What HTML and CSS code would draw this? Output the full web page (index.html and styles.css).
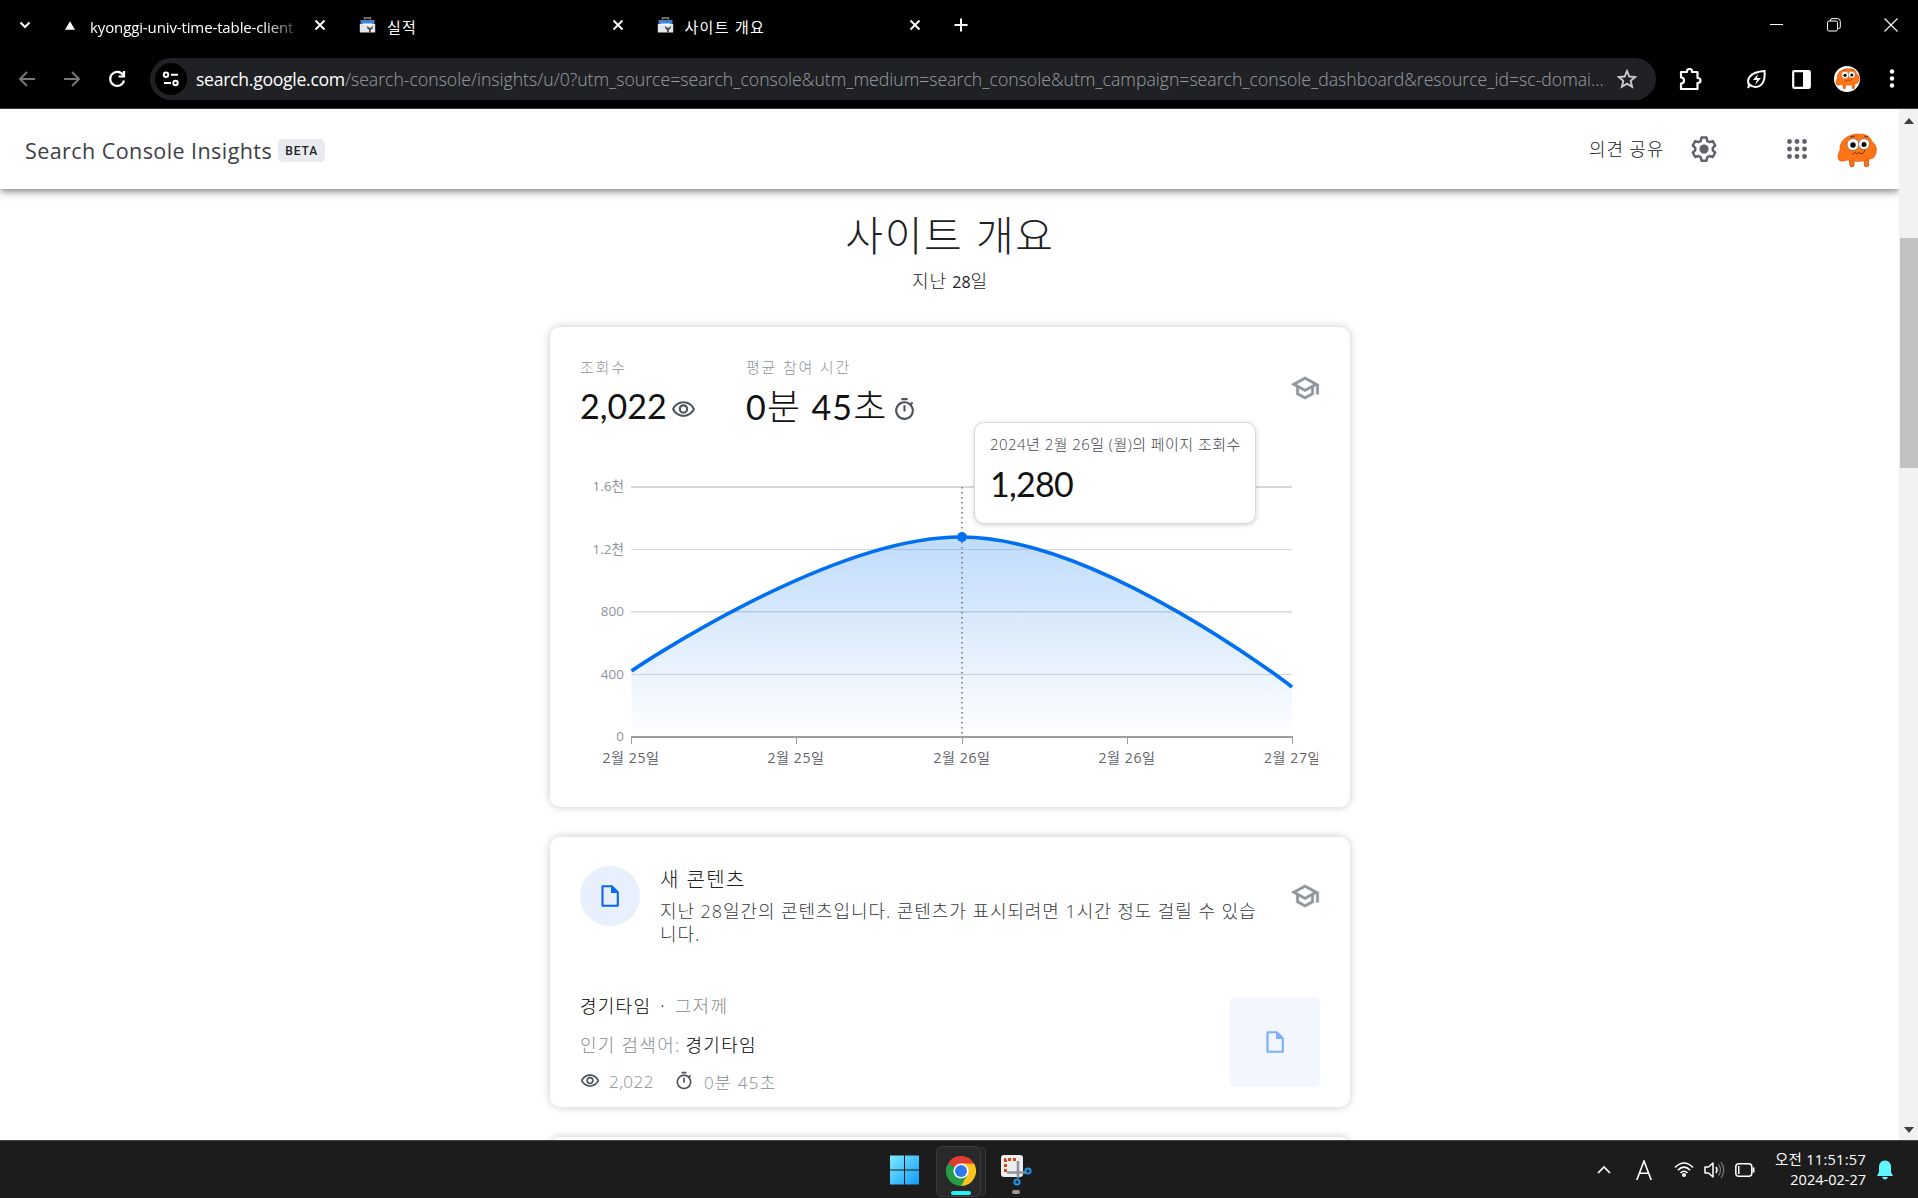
FILE: index.html
```html
<!DOCTYPE html>
<html lang="ko">
<head>
<meta charset="utf-8">
<title>사이트 개요</title>
<link rel="stylesheet" href="styles.css">
</head>
<body>
<svg class="defs" width="0" height="0">
  <defs>
    <symbol id="x" viewBox="0 0 12 12"><path d="M1.500 1.500l9 9M10.500 1.500l-9 9" fill="none" stroke="currentColor" stroke-width="1.900"/></symbol>
    <symbol id="tool" viewBox="0 0 17 16"><path d="M5.500 2.500V1h6v1.500" fill="none" stroke="#8a8d91" stroke-width="1.300"/><path d="M1.500 3h14v5h-14z" fill="#777b80"/><path d="M2 4h13v3.500H2z" fill="#2f86f6"/><path d="M.8 7h15.400v8.500H.8z" fill="#e4e6e9"/><path d="M4 6.500h9v1.500H4z" fill="#fff"/><path d="M8.500 9a2.300 2.300 0 0 0 1.500 3.500V15.500h1.700v-3A2.300 2.300 0 0 0 13.500 9l-1.500 1.800H10z" fill="#444"/></symbol>
    <symbol id="eye" viewBox="0 0 24 24"><path d="M12 4C7 4 2.730 7.110 1 11.500 2.730 15.890 7 19 12 19s9.270-3.110 11-7.500C21.270 7.110 17 4 12 4zm0 13c-3.800 0-7.200-2.100-8.800-5.500C4.800 8.100 8.200 6 12 6s7.200 2.100 8.800 5.500C19.200 14.900 15.800 17 12 17zm0-10c-2.500 0-4.500 2-4.500 4.500S9.500 16 12 16s4.500-2 4.500-4.500S14.500 7 12 7zm0 7a2.500 2.500 0 1 1 0-5 2.500 2.500 0 0 1 0 5z" fill="currentColor"/></symbol>
    <symbol id="timer" viewBox="0 0 24 24"><path d="M15 1H9v2h6V1zm-4 13h2V8h-2v6zm8.030-6.610l1.420-1.420c-.43-.51-.9-.99-1.410-1.410l-1.420 1.420A8.960 8.960 0 0 0 12 4a9 9 0 1 0 7.030 3.390zM12 20a7 7 0 1 1 0-14 7 7 0 0 1 0 14z" fill="currentColor"/></symbol>
    <symbol id="school" viewBox="0 0 24 24"><path d="M12 3L1 9l4 2.180v6L12 21l7-3.820v-6l2-1.090V17h2V9L12 3zm6.820 6L12 12.720 5.180 9 12 5.280 18.820 9zM17 15.990l-5 2.730-5-2.730v-3.720L12 15l5-2.730v3.720z" fill="currentColor" stroke="currentColor" stroke-width=".35"/></symbol>
    <symbol id="doc" viewBox="0 0 18 22"><path d="M1.500 1.200h9.300L16.800 7.200v13.600H1.500z" fill="none" stroke="currentColor" stroke-width="2.100" stroke-linejoin="round"/><path d="M10 1.500V8h6.500z" fill="currentColor"/></symbol>
    <symbol id="blob" viewBox="0 0 40 36"><path d="M12 24h5v9q-2.500 2-4 0zM27 24h5l-.5 9q-2 2-4 0z" fill="#f37414" stroke="#b9480a" stroke-width=".7"/><path d="M3 17C2 8 10 1 22 1c8 0 12 3 13 8 4 2 5 6 4 11-1 4-3 6-7 6-5 3-14 3-21 1-4 1-7 2-9 0-2-3-1-6 1-10z" fill="#ff7417" stroke="#d9560c" stroke-width=".6"/><path d="M13 4l5-1M27 3l4 1" stroke="#333" stroke-width=".9"/><circle cx="16" cy="11.500" r="6" fill="#fff" stroke="#7b3d17" stroke-width=".6"/><circle cx="27" cy="11" r="5.500" fill="#fff" stroke="#7b3d17" stroke-width=".6"/><circle cx="16" cy="12" r="2.700"/><circle cx="27" cy="11.500" r="2.500"/><path d="M15 22q3-4 5-1 2-3 5 0 2-1 3-4" fill="none" stroke="#74320d" stroke-width="1"/></symbol>
  </defs>
</svg>

<div class="browser">
  <div class="tabs">
    <svg class="chev" width="12" height="8" viewBox="0 0 12 8"><path d="M1.500 1.500L6 6l4.500-4.500" fill="none" stroke="#fff" stroke-width="2"/></svg>
    <div class="tab first">
      <svg width="10" height="9" viewBox="0 0 12 10"><path d="M6 0l6 10H0z" fill="#fff"/></svg>
      <span class="tab-name fade">kyonggi-univ-time-table-client</span>
      <svg width="12" height="12"><use href="#x"/></svg>
    </div>
    <div class="tab">
      <svg width="17" height="16"><use href="#tool"/></svg>
      <span class="tab-name">실적</span>
      <svg width="12" height="12"><use href="#x"/></svg>
    </div>
    <div class="tab">
      <svg width="17" height="16"><use href="#tool"/></svg>
      <span class="tab-name">사이트 개요</span>
      <svg width="12" height="12"><use href="#x"/></svg>
    </div>
    <svg class="plus" width="14" height="14" viewBox="0 0 14 14"><path d="M7 .5v13M.5 7h13" stroke="#fff" stroke-width="2"/></svg>
    <div class="window-buttons">
      <svg width="14" height="14" viewBox="0 0 14 14"><path d="M0 6.500h13" stroke="#fff"/></svg>
      <svg width="14" height="14" viewBox="0 0 14 14"><g fill="none" stroke="#fff"><rect x=".5" y="3" width="10" height="10" rx="1.500"/><path d="M3.500 3V2Q3.500.6 5 .6h5.500Q13.300.6 13.300 3.500V9q0 1.500-2 1.500"/></g></svg>
      <svg width="14" height="14" viewBox="0 0 14 14"><path d="M.5.5l13 13M13.500.5l-13 13" stroke="#fff" stroke-width="1.100"/></svg>
    </div>
  </div>
  <div class="toolbar">
    <svg class="nav-icon dim" width="18" height="18" viewBox="0 0 18 18"><path d="M17 9H2M9 2L2 9l7 7" fill="none" stroke="currentColor" stroke-width="2"/></svg>
    <svg class="nav-icon dim" width="18" height="18" viewBox="0 0 18 18"><path d="M1 9h15M9 2l7 7-7 7" fill="none" stroke="currentColor" stroke-width="2"/></svg>
    <svg class="nav-icon" width="18" height="18" viewBox="0 0 18 18"><path d="M15 5a7 7 0 1 0 1 5.500M16 1v5.500h-5.500" fill="none" stroke="currentColor" stroke-width="2.200"/></svg>
    <div class="omnibox">
      <div class="site-info"><svg width="18" height="16" viewBox="0 0 18 16"><g fill="none" stroke="#fff" stroke-width="2"><circle cx="4" cy="3.800" r="2.200"/><path d="M9 3.800h7M2 12h7"/><circle cx="13.500" cy="12" r="2.200"/></g></svg></div>
      <div class="url"><b>search.google.com</b>/search-console/insights/u/0?utm_source=search_console&amp;utm_medium=search_console&amp;utm_campaign=search_console_dashboard&amp;resource_id=sc-domai...</div>
      <svg width="20" height="20" viewBox="0 0 20 20"><path d="M10 2l2.300 5.500 6 .5-4.600 3.900 1.400 5.900L10 14.700l-5.100 3.100 1.400-5.900L1.700 8l6-.5z" fill="none" stroke="#c7cacf" stroke-width="1.900"/></svg>
    </div>
    <div class="actions">
      <svg width="23" height="23" viewBox="0 0 23 23"><path d="M2 4h6q-.4-3 2.500-3T13 4h5.500v6q3 0 3 2.500t-3 2.500v6H2v-5.500q3 0 3-3t-3-3z" fill="none" stroke="#fff" stroke-width="2.200" stroke-linejoin="round"/></svg>
      <svg width="21" height="20" viewBox="0 0 21 20"><path d="M3.500 16.500C0 11 3 3 18.500 2c1 9-2 16-9 16-2 0-4-.5-6-2.500L2 19" fill="none" stroke="#fff" stroke-width="2"/><path d="M12 5l-5 6h4l-2 5 6-7h-4z" fill="#fff"/></svg>
      <svg width="19" height="19" viewBox="0 0 19 19"><rect x="1.200" y="1.200" width="16.600" height="16.600" rx="1" fill="none" stroke="#fff" stroke-width="2.200"/><path d="M11 1h7v17h-7z" fill="#fff"/></svg>
      <div class="profile"><svg width="25" height="22"><use href="#blob"/></svg></div>
      <svg width="6" height="20" viewBox="0 0 6 20"><g fill="#fff"><circle cx="3" cy="2.500" r="2.200"/><circle cx="3" cy="9.500" r="2.200"/><circle cx="3" cy="16.500" r="2.200"/></g></svg>
    </div>
  </div>
</div>

<div class="viewport">
  <div class="page">
    <header class="appbar">
      <span class="brand">Search Console Insights</span><span class="beta">BETA</span>
      <div class="appbar-right">
        <span class="feedback">의견 공유</span>
        <svg class="gear" width="30" height="30" viewBox="0 0 24 24"><path d="M10 2.800h4l.6 2.700 1.800 1 2.600-.8 2 3.500-2 1.900v1.900l2 1.900-2 3.500-2.600-.8-1.800 1-.6 2.700h-4l-.6-2.700-1.800-1-2.600.8-2-3.500 2-1.900v-1.900L3 9.200l2-3.500 2.600.8 1.800-1z" fill="none" stroke="#5f6368" stroke-width="2" stroke-linejoin="round"/><circle cx="12" cy="12" r="3.700" fill="#5f6368"/></svg>
        <svg class="apps" width="20" height="20" viewBox="0 0 20 20"><g fill="#5f6368"><circle cx="2.500" cy="2.500" r="2.400"/><circle cx="10" cy="2.500" r="2.400"/><circle cx="17.500" cy="2.500" r="2.400"/><circle cx="2.500" cy="10" r="2.400"/><circle cx="10" cy="10" r="2.400"/><circle cx="17.500" cy="10" r="2.400"/><circle cx="2.500" cy="17.500" r="2.400"/><circle cx="10" cy="17.500" r="2.400"/><circle cx="17.500" cy="17.500" r="2.400"/></g></svg>
        <svg class="avatar" width="40" height="36"><use href="#blob"/></svg>
      </div>
    </header>
    <main>
      <h1>사이트 개요</h1>
      <p class="period">지난 <span>28</span>일</p>

      <section class="card overview">
        <div class="metrics">
          <div class="metric views"><span class="label">조회수</span><div class="value"><span class="num">2,022</span><svg width="25" height="25"><use href="#eye"/></svg></div></div>
          <div class="metric time"><span class="label">평균 참여 시간</span><div class="value"><span class="num">0<i>분</i> 45<i>초</i></span><svg width="25" height="25"><use href="#timer"/></svg></div></div>
          <svg class="school" width="30" height="30"><use href="#school"/></svg>
        </div>
        <svg class="chart" width="740" height="310" viewBox="580 470 740 310">
          <defs><linearGradient id="fill" x1="0" y1="0" x2="0" y2="1"><stop offset="0" stop-color="#1a7fef" stop-opacity=".28"/><stop offset="1" stop-color="#1a7fef" stop-opacity="0"/></linearGradient></defs>
          <g fill="#d7d8dc"><path d="M631 486h661v2H631zM631 611h661v1.500H631z"/><path d="M631 549h661v1H631zM631 674h661v1H631z"/></g>
          <path d="M631.500 671C631.500 671 830 536 962 537C1100 538 1292 687 1292 687V737H631.500z" fill="url(#fill)"/>
          <path d="M631 736h662v2H631z" fill="#9e9e9e"/>
          <path d="M631.500 737v7M796.500 737v7M962.500 737v7M1127.500 737v7M1292.500 737v7" stroke="#9e9e9e"/>
          <path d="M962 487v250" stroke="#707070" stroke-width="1.500" stroke-dasharray="1.500 3.500"/>
          <path d="M631.500 671C631.500 671 830 536 962 537C1100 538 1292 687 1292 687" fill="none" stroke="#0070f0" stroke-width="3.700"/>
          <circle cx="962" cy="537" r="5" fill="#0070f0"/>
          <g class="y-axis"><text x="624" y="491">1.6천</text><text x="624" y="554">1.2천</text><text x="624" y="616">800</text><text x="624" y="679">400</text><text x="624" y="741">0</text></g>
          <svg x="580" y="740" width="738" height="40" viewBox="580 740 738 40"><g class="x-axis"><text x="631" y="763">2월 25일</text><text x="796" y="763">2월 25일</text><text x="962" y="763">2월 26일</text><text x="1127" y="763">2월 26일</text><text x="1292.500" y="763">2월 27일</text></g></svg>
        </svg>
        <div class="tooltip"><span class="tip-label">2024년 2월 26일 (월)의 페이지 조회수</span><span class="tip-value">1,280</span></div>
      </section>

      <section class="card content">
        <div class="content-head">
          <div class="badge"><svg width="18" height="22"><use href="#doc"/></svg></div>
          <div class="content-text"><h2>새 콘텐츠</h2><p>지난 28일간의 콘텐츠입니다. 콘텐츠가 표시되려면 1시간 정도 걸릴 수 있습<br>니다.</p></div>
          <svg class="school" width="30" height="30"><use href="#school"/></svg>
        </div>
        <div class="item">
          <div class="item-text">
            <div class="row"><span class="strong">경기타임</span><span class="dot">·</span><span class="grey">그저께</span></div>
            <div class="row query"><span class="grey">인기 검색어:</span><span class="term">경기타임</span></div>
            <div class="row stats"><svg width="20" height="20"><use href="#eye"/></svg><span>2,022</span><svg class="clock" width="20" height="20"><use href="#timer"/></svg><span class="duration">0분 45초</span></div>
          </div>
          <div class="thumb"><svg width="18" height="22"><use href="#doc"/></svg></div>
        </div>
      </section>
      <section class="card next"></section>
    </main>
  </div>
  <div class="scrollbar"><svg width="10" height="6"><path d="M5 0l5 6H0z" fill="#404040"/></svg><div class="handle"></div><svg class="down" width="10" height="6"><path d="M0 0h10L5 6z" fill="#404040"/></svg></div>
</div>

<footer class="taskbar">
  <div class="apps-row">
    <svg width="30" height="30" viewBox="0 0 30 30"><defs><linearGradient id="win" x1="0" y1="0" x2="1" y2="1"><stop stop-color="#7deaff"/><stop offset="1" stop-color="#119cf8"/></linearGradient></defs><path d="M0 .5h14v14H0zM15 .5h14v14H15zM0 15.500h14v14H0zM15 15.500h14v14H15z" fill="url(#win)"/></svg>
    <div class="chrome-box">
      <svg width="30" height="30" viewBox="-15 -15 30 30"><path d="M0 0L-13 -7.500A15 15 0 0 1 13 -7.500L6 -7z" fill="#e23c32"/><path d="M0 0L13 -7.500A15 15 0 0 1 0 15z" fill="#fcc31e"/><path d="M0 0L0 15A15 15 0 0 1 -13 -7.500z" fill="#249c49"/><path d="M-13-7.500L-6.500 3.700 0 0zM0 15L6.500 3.800 0 0z" fill="#249c49"/><path d="M0-7.500H13L6.500 3.800 0 0z" fill="#fcc31e"/><circle r="7.600" fill="#fff"/><circle r="6" fill="#2c78ee"/></svg>
      <i></i>
    </div>
    <div class="snip">
      <svg width="32" height="31" viewBox="0 0 32 31"><rect x="1" width="22" height="22" rx="3" fill="#eceeef"/><path d="M5.500 17V4.500H18" fill="none" stroke="#d8440f" stroke-width="3" stroke-dasharray="3 2"/><path d="M7 17.500h18M18 6v17" stroke="#8d969e" stroke-width="2.600"/><g fill="none" stroke="#1c98e8" stroke-width="2"><circle cx="28" cy="16" r="2.600"/><circle cx="17" cy="27" r="2.600"/></g></svg>
      <i></i>
    </div>
  </div>
  <div class="tray">
    <svg class="t-up" width="14" height="9" viewBox="0 0 14 9"><path d="M1 8l6-6 6 6" fill="none" stroke="#fff" stroke-width="1.700"/></svg>
    <svg class="t-a" width="16" height="20" viewBox="0 0 16 20"><path d="M.8 20L8 1l7.200 19M3.500 13.300h9" fill="none" stroke="#fff" stroke-width="1.600"/></svg>
    <svg class="t-wifi" width="20" height="17" viewBox="0 0 20 17"><g fill="none" stroke="#fff" stroke-width="1.600"><path d="M1 6.500Q10-2.500 19 6.500M3.800 9.300Q10 3 16.200 9.300M6.500 12Q10 8.500 13.500 12"/></g><circle cx="10" cy="14" r="2" fill="#fff"/></svg>
    <svg class="t-vol" width="21" height="18" viewBox="0 0 21 18"><path d="M1 6h3.500L9 2v14l-4.500-4H1zM12 6q2 3 0 6" fill="none" stroke="#fff" stroke-width="1.500" stroke-linejoin="round"/><path d="M14.500 3.500q4 5.500 0 11M17 1q5.500 8 0 16" fill="none" stroke="#777" stroke-width="1.300"/></svg>
    <svg class="t-bat" width="20" height="14" viewBox="0 0 20 14"><rect x=".8" y=".8" width="16" height="12.400" rx="3" fill="none" stroke="#fff" stroke-width="1.500"/><path d="M3 3h1.500v8H3zM17.500 4.500h2v5h-2z" fill="#fff"/></svg>
    <div class="clock-text"><span class="clock-time">오전 11:51:57</span><span>2024-02-27</span></div>
    <svg class="t-bell" width="16" height="20" viewBox="0 0 16 20"><path d="M8 .5c4 0 6 3 6 6.500V12l2 4H0l2-4V7C2 3.500 4 .5 8 .5zM5 17h6q-1 2.500-3 2.500T5 17z" fill="#60f5ff"/></svg>
  </div>
</footer>
</body>
</html>
```
FILE: styles.css
```css
* { box-sizing: border-box; }
body { margin: 0; width: 1918px; height: 1198px; overflow: hidden; display: flex; flex-direction: column; background: #fff; font-family: "Open Sans", "Noto Sans CJK KR", sans-serif; color: #202124; }
h1, h2, p { margin: 0; font-weight: 300; }
svg { display: block; flex: none; }
i { font-style: normal; }
.defs { position: absolute; }

.browser { height: 109px; background: #000; border-bottom: 1px solid #38383b; color: #fff; flex: none; }
.tabs { height: 50px; display: flex; align-items: center; padding-left: 19px; }
.chev { margin-right: 34px; }
.tab { display: flex; align-items: center; width: 297.500px; padding-right: 33px; }
.tab.first { width: 294px; }
.tab-name { flex: 1; margin-left: 11px; overflow: hidden; white-space: nowrap; font-size: 15px; line-height: 22px; padding-top: 3px; letter-spacing: 1.300px; }
.tab.first .tab-name { margin: 0 16px 0 15px; letter-spacing: -.12px; }
.fade { mask-image: linear-gradient(90deg, #000 84%, rgba(0,0,0,.25) 98%); }
.window-buttons { margin-left: auto; display: flex; gap: 43px; padding-right: 20px; }
.toolbar { height: 58px; display: flex; align-items: center; padding: 0 23px 0 18px; }
.nav-icon { margin-right: 27px; }
.dim { color: #777; }
.omnibox { width: 1506px; flex: none; height: 42px; background: #202124; border-radius: 21px; display: flex; align-items: center; padding: 0 19px 0 5px; margin-left: -3px; }
.site-info { width: 32px; height: 32px; flex: none; border-radius: 50%; background: #000; display: grid; place-items: center; }
.url { flex: 1; min-width: 0; margin-left: 9px; font-size: 17.650px; line-height: 28px; white-space: nowrap; color: #9aa0a6; font-weight: 300; }
.url b { font-weight: 400; color: #fff; letter-spacing: -.3px; }
.actions { margin-left: auto; display: flex; align-items: center; }
.actions > :nth-child(2) { margin-left: 44px; }
.actions > :nth-child(3) { margin-left: 25px; }
.profile { width: 26px; height: 26px; border-radius: 50%; background: #fff; overflow: hidden; display: grid; place-items: center; margin: 0 29px 0 23px; }

.viewport { flex: 1; min-height: 0; display: flex; }
.page { flex: 1; overflow: hidden; }
.appbar { height: 80px; display: flex; align-items: center; padding: 0 22px 0 25px; box-shadow: 0 2px 8px rgba(0,0,0,.55); position: relative; background: #fff; }
.brand { font-size: 21.500px; letter-spacing: .43px; color: #3c4043; padding-top: 2px; }
.beta { margin: 2px 0 0 6px; width: 47px; height: 23px; border-radius: 5px; background: #e8eaed; font: 500 12px/24px Roboto, sans-serif; text-align: center; letter-spacing: .9px; }
.appbar-right { margin-left: auto; display: flex; align-items: center; }
.feedback { font-size: 18px; font-weight: 300; letter-spacing: .8px; margin-top: -3px; }
.gear { margin: 0 68px 0 25px; }
.apps { margin-right: 30px; }
.avatar { margin-top: 3px; }
main { width: 800px; margin: 0 0 0 550px; }
h1 { font-size: 41px; line-height: 58px; margin-top: 17px; text-align: center; letter-spacing: 1.700px; }
.period { text-align: center; font-size: 18px; line-height: 24px; margin-top: 5px; letter-spacing: .8px; }
.period span { font-size: 16px; font-weight: 400; letter-spacing: 0; }
.card { background: #fff; border-radius: 10px; box-shadow: 0 0 8px rgba(0,0,0,.22); position: relative; }
.overview { height: 480px; margin-top: 33px; padding: 25px 30px 0; }
.metrics { display: flex; height: 118px; }
.label { display: block; font-size: 15px; line-height: 30px; color: #8d9298; font-weight: 300; letter-spacing: 1.800px; white-space: nowrap; }
.views { width: 166px; }
.value { display: flex; align-items: center; gap: 4px; height: 48px; font: 400 34px/48px Lato, "Noto Sans CJK KR", sans-serif; color: #111; white-space: nowrap; }
.value i { font-size: 36px; font-weight: 300; letter-spacing: 1.500px; }
.time .num { letter-spacing: 1.200px; }
.value svg { color: #4c5359; margin-top: 6px; }
.school { color: #8f959b; margin-left: auto; }
.overview .school { margin-top: 21px; }
.y-axis text { text-anchor: end; font-size: 13.500px; fill: #909399; }
.x-axis text { text-anchor: middle; font-size: 14px; fill: #5f6368; letter-spacing: .6px; }
.tooltip { position: absolute; left: 424px; top: 95px; width: 282px; height: 102px; border: 1px solid #d9dadd; border-radius: 10px; background: #fff; box-shadow: 0 1px 5px rgba(0,0,0,.18); padding: 8px 15px; white-space: nowrap; }
.tip-label { display: block; font-size: 15px; line-height: 26px; color: #3f4348; font-weight: 300; letter-spacing: .45px; }
.tip-value { display: block; font: 400 34px/54px Lato, sans-serif; color: #111; letter-spacing: -.7px; }

.content { height: 270px; margin-top: 30px; padding: 29px 30px 0; }
.content-head { display: flex; height: 129px; }
.badge { width: 60px; height: 60px; border-radius: 50%; background: #e8f0fe; color: #0b66f0; display: grid; place-items: center; }
.content-text { margin-left: 20px; white-space: nowrap; }
h2 { font-size: 20px; line-height: 28px; letter-spacing: 1.400px; }
.content-text p { margin-top: 6px; font-size: 18px; line-height: 23px; color: #36393d; letter-spacing: .93px; }
.content .school { margin-top: 15px; }
.item { display: flex; justify-content: space-between; }
.row { display: flex; align-items: center; height: 20px; font-size: 18px; font-weight: 300; white-space: nowrap; letter-spacing: 1.250px; }
.strong, .term { color: #000; }
.dot { margin: 0 9px; }
.grey, .stats span { color: #878c92; }
.query { margin-top: 19px; }
.term { margin-left: 5px; }
.stats { margin-top: 17px; font-size: 17px; letter-spacing: .5px; }
.stats svg { color: #4c5359; }
.stats span { margin-left: 9px; }
.stats .duration { letter-spacing: 1.300px; margin-left: 10px; }
.stats .clock { margin-left: 20px; }
.thumb { width: 90px; height: 90px; margin-top: 2px; border-radius: 5px; background: #f1f6ff; color: #7baefa; display: grid; place-items: center; }
.next { height: 100px; margin-top: 30px; }
.scrollbar { width: 19px; background: #f1f1f1; display: flex; flex-direction: column; align-items: center; padding: 9px 0 7px; }
.handle { width: 18px; height: 230px; background: #c1c1c1; margin: 114px 0 auto 1px; }

.taskbar { height: 58px; flex: none; background: #1c1c1c; border-top: 1px solid #444; color: #fff; display: flex; }
.apps-row { display: flex; align-items: flex-start; padding: 14px 0 0 890px; }
.chrome-box { width: 45px; height: 51px; margin: -9px 0 0 16px; border: 1px solid #3b3b3b; border-radius: 6px; background: #292929; display: flex; flex-direction: column; align-items: center; padding: 9px 0 0 4px; box-shadow: 5px 0 0 -1px #252525, 6px 0 0 -1px #3b3b3b; }
.apps-row i { display: block; width: 20px; height: 4px; border-radius: 2px; background: #22f0fa; margin-top: 5px; }
.snip { margin: 0 0 0 19px; }
.snip i { width: 8px; background: #999; margin: 4px 0 0 12px; }
.tray { margin-left: auto; display: flex; align-items: center; padding-right: 25px; }
.t-a { margin-left: 25px; }
.t-wifi { margin-left: 22px; }
.t-vol { margin-left: 10px; }
.t-bat { margin-left: 10px; }
.clock-text { margin-left: 19px; width: 92px; display: flex; flex-direction: column; align-items: flex-end; font-size: 14.500px; line-height: 20px; white-space: nowrap; }
.clock-time { letter-spacing: .3px; }
.t-bell { margin-left: 11px; }
```
